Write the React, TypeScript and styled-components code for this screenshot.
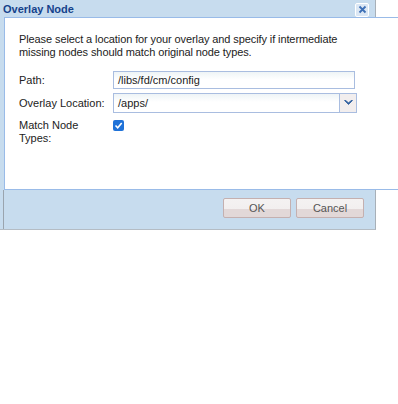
import React from "react";
import styled, { createGlobalStyle } from "styled-components";

const Global = createGlobalStyle`
  html, body { margin: 0; padding: 0; background: #ffffff; }
  body { font-family: Tahoma, "DejaVu Sans", "Liberation Sans", sans-serif; }
`;

const Window = styled.div`
  width: 375px;
  background: #c7dcee;
  border-right: 1px solid #a8b0b8;
  border-bottom: 1px solid #b4bcc4;
  display: flex;
  flex-direction: column;
`;

const TitleBar = styled.div`
  height: 17px;
  display: flex;
  align-items: center;
  justify-content: space-between;
  padding: 0 6px 0 3px;
`;

const Title = styled.span`
  font-family: "Liberation Sans", Arial, sans-serif;
  font-weight: bold;
  font-size: 11px;
  color: #15428b;
`;

const CloseBtn = styled.div`
  width: 12px;
  height: 12px;
  border: 1px solid #ffffff;
  border-radius: 2px;
  background: #dbe7f4;
  display: flex;
  align-items: center;
  justify-content: center;
  margin-top: 2px;
`;

const Body = styled.div`
  margin-left: 4px;
  width: 367px;
  height: 156px;
  background: #ffffff;
  border: 1px solid #99bbe8;
  padding: 15px 14px 0 14px;
  box-sizing: content-box;
  font-family: "Liberation Sans", Arial, sans-serif;
  font-size: 11px;
  color: #222;
`;

const Intro = styled.p`
  margin: 0 0 12px 0;
  line-height: 13px;
  letter-spacing: -0.1px;
`;

const Row = styled.div`
  display: flex;
  align-items: center;
  margin-bottom: 4px;
`;

const CheckRow = styled.div`
  display: flex;
  align-items: flex-start;
  margin-top: 6px;
`;

const Label = styled.label`
  width: 94px;
  line-height: 13px;
`;

const Input = styled.div`
  width: 242px;
  height: 18px;
  border: 1px solid #a9bde0;
  background: linear-gradient(#eef4f6, #ffffff 8px);
  display: flex;
  align-items: center;
  padding-left: 4px;
  box-sizing: border-box;
  font-family: "Liberation Sans", Arial, sans-serif;
  font-size: 11px;
  color: #222;
`;

const SelectWrap = styled.div`
  width: 244px;
  height: 20px;
  border: 1px solid #a9bde0;
  display: flex;
  box-sizing: border-box;
`;

const SelectText = styled.div`
  flex: 1;
  background: linear-gradient(#eef4f6, #ffffff 8px);
  display: flex;
  align-items: center;
  padding-left: 4px;
  font-size: 11px;
  color: #222;
`;

const Trigger = styled.div`
  width: 16px;
  border-left: 1px solid #a9bde0;
  background: #f2eeee;
  display: flex;
  align-items: center;
  justify-content: center;
`;

const Check = styled.div`
  width: 11px;
  height: 11px;
  border-radius: 2px;
  background: #1f72d8;
  display: flex;
  align-items: center;
  justify-content: center;
  margin-top: 1px;
`;

const Footer = styled.div`
  height: 39px;
  display: flex;
  justify-content: flex-end;
  align-items: flex-start;
  gap: 5px;
  padding: 8px 11px 0 0;
  box-sizing: border-box;
  border-left: 1px solid #9aa4ae;
  margin-left: 3px;
`;

const Button = styled.div`
  width: 68px;
  height: 20px;
  box-sizing: border-box;
  border: 1px solid #c4b0b0;
  border-radius: 2px;
  background: linear-gradient(#f4f2f2 0, #f2efef 55%, #e2d8d8 56%, #e2d8d8 100%);
  display: flex;
  align-items: center;
  justify-content: center;
  font-family: "Liberation Sans", Arial, sans-serif;
  font-size: 11px;
  color: #555;
`;

export default function App() {
  return (
    <>
      <Global />
      <Window>
        <TitleBar>
          <Title>Overlay Node</Title>
          <CloseBtn>
            <svg width="9" height="9" viewBox="0 0 9 9">
              <path d="M1.5 1.5 L7.5 7.5 M7.5 1.5 L1.5 7.5" stroke="#3d6fb6" strokeWidth="1.8" />
            </svg>
          </CloseBtn>
        </TitleBar>
        <Body>
          <Intro>
            Please select a location for your overlay and specify if intermediate
            <br />
            missing nodes should match original node types.
          </Intro>
          <Row>
            <Label>Path:</Label>
            <Input>/libs/fd/cm/config</Input>
          </Row>
          <Row>
            <Label>Overlay Location:</Label>
            <SelectWrap>
              <SelectText>/apps/</SelectText>
              <Trigger>
                <svg width="9" height="6" viewBox="0 0 9 6">
                  <path d="M0.5 0.5 L4.5 4.5 L8.5 0.5 L7 0.5 L4.5 3 L2 0.5 Z" fill="#2d5e9e" stroke="#2d5e9e" strokeWidth="0.8" />
                </svg>
              </Trigger>
            </SelectWrap>
          </Row>
          <CheckRow>
            <Label>
              Match Node
              <br />
              Types:
            </Label>
            <Check>
              <svg width="9" height="9" viewBox="0 0 9 9">
                <path d="M1.5 4.5 L3.7 6.7 L7.7 2" stroke="#fff" strokeWidth="1.6" fill="none" />
              </svg>
            </Check>
          </CheckRow>
        </Body>
        <Footer>
          <Button>OK</Button>
          <Button>Cancel</Button>
        </Footer>
      </Window>
    </>
  );
}
